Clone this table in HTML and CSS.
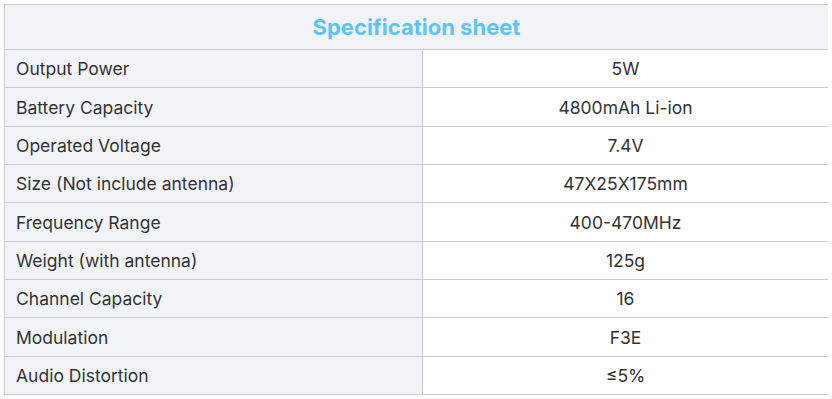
FILE: index.html
```html
<!DOCTYPE html>
<html>
<head>
<meta charset="utf-8">
<link rel="stylesheet" href="styles.css">
</head>
<body>
<table class="spec">
  <colgroup><col class="col-key"><col class="col-val"></colgroup>
  <thead>
    <tr><th colspan="2" class="title">Specification sheet</th></tr>
  </thead>
  <tbody>
    <tr><td class="key">Output Power</td><td class="val">5W</td></tr>
    <tr><td class="key">Battery Capacity</td><td class="val">4800mAh Li-ion</td></tr>
    <tr><td class="key">Operated Voltage</td><td class="val">7.4V</td></tr>
    <tr><td class="key">Size (Not include antenna)</td><td class="val">47X25X175mm</td></tr>
    <tr><td class="key">Frequency Range</td><td class="val">400-470MHz</td></tr>
    <tr><td class="key">Weight (with antenna)</td><td class="val">125g</td></tr>
    <tr><td class="key">Channel Capacity</td><td class="val">16</td></tr>
    <tr><td class="key">Modulation</td><td class="val">F3E</td></tr>
    <tr><td class="key">Audio Distortion</td><td class="val">≤5%</td></tr>
  </tbody>
</table>
</body>
</html>
```
FILE: styles.css
```css
body {
  margin: 4px;
  background: #ffffff;
  font-family: Inter, "Noto Sans", sans-serif;
  color: #333333;
}
.spec {
  border-collapse: collapse;
  width: 825px;
  table-layout: fixed;
}
.col-key {
  width: 418px;
}
.spec th, .spec td {
  border: 1px solid #cccccc;
  padding: 0 11px;
}
.title {
  height: 44px;
  background: #f2f3f7;
  color: #5bc5f5;
  font-size: 22px;
  font-weight: 700;
  text-align: center;
}
.key {
  height: 37.35px;
  background: #f2f3f7;
  font-size: 17.5px;
  text-align: left;
}
.val {
  height: 37.35px;
  background: #ffffff;
  font-size: 17.5px;
  text-align: center;
}
```
